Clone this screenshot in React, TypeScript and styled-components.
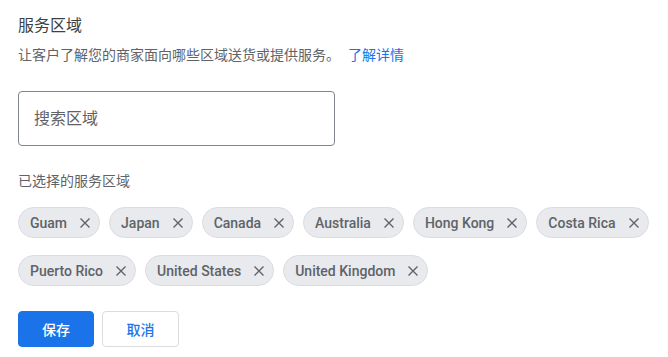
import { createGlobalStyle, styled } from "styled-components";

const GlobalStyle = createGlobalStyle`
  body {
    margin: 0;
    background: #ffffff;
    font-family: Roboto, "Noto Sans CJK SC", sans-serif;
  }
`;

const Wrapper = styled.div`
  padding: 14px 18px;
  display: flex;
  flex-direction: column;
  align-items: flex-start;
`;

const Title = styled.h2`
  margin: 0;
  font-size: 16px;
  line-height: 24px;
  font-weight: 400;
  color: #3c4043;
`;

const Description = styled.p`
  margin: 7px 0 0;
  font-size: 14px;
  line-height: 20px;
  color: #5f6368;
`;

const Link = styled.a`
  color: #1a73e8;
  text-decoration: none;
  margin-left: 8px;
`;

const SearchBox = styled.div`
  margin-top: 26px;
  width: 317px;
  height: 55px;
  box-sizing: border-box;
  border: 1px solid #80868b;
  border-radius: 4px;
  display: flex;
  align-items: center;
  padding: 0 15px;
`;

const SearchInput = styled.input`
  border: none;
  outline: none;
  width: 100%;
  font-family: Roboto, "Noto Sans CJK SC", sans-serif;
  font-size: 16px;
  color: #3c4043;
  padding: 0;
  background: transparent;

  &::placeholder {
    color: #5f6368;
  }
`;

const Label = styled.div`
  margin-top: 25px;
  font-size: 14px;
  line-height: 20px;
  color: #5f6368;
`;

const ChipList = styled.div`
  margin-top: 16px;
  display: flex;
  flex-wrap: wrap;
  column-gap: 9px;
  row-gap: 17px;
  width: 100%;
`;

const Chip = styled.div`
  height: 31px;
  box-sizing: border-box;
  display: flex;
  align-items: center;
  padding: 0 8px 0 11px;
  background: #e8eaed;
  border: 1px solid #dadce0;
  border-radius: 16px;
  font-size: 14px;
  font-weight: 500;
  color: #5f6368;
`;

const RemoveIcon = styled.svg`
  margin-left: 12px;
  flex-shrink: 0;
`;

const Actions = styled.div`
  margin-top: 25px;
  display: flex;
  gap: 8px;
`;

const Button = styled.button<{ $primary?: boolean }>`
  height: 36px;
  width: ${(p) => (p.$primary ? "76px" : "77px")};
  box-sizing: border-box;
  padding: 0;
  display: flex;
  align-items: center;
  justify-content: center;
  border-radius: 4px;
  font-family: Roboto, "Noto Sans CJK SC", sans-serif;
  font-size: 14px;
  font-weight: 500;
  cursor: pointer;
  background: ${(p) => (p.$primary ? "#1a73e8" : "#ffffff")};
  color: ${(p) => (p.$primary ? "#ffffff" : "#1a73e8")};
  border: 1px solid ${(p) => (p.$primary ? "#1a73e8" : "#dadce0")};
`;

const regions = [
  "Guam",
  "Japan",
  "Canada",
  "Australia",
  "Hong Kong",
  "Costa Rica",
  "Puerto Rico",
  "United States",
  "United Kingdom",
];

export default function App() {
  return (
    <>
      <GlobalStyle />
      <Wrapper>
        <Title>服务区域</Title>
        <Description>
          让客户了解您的商家面向哪些区域送货或提供服务。
          <Link href="#">了解详情</Link>
        </Description>
        <SearchBox>
          <SearchInput placeholder="搜索区域" />
        </SearchBox>
        <Label>已选择的服务区域</Label>
        <ChipList>
          {regions.map((r) => (
            <Chip key={r}>
              {r}
              <RemoveIcon width="12" height="12" viewBox="0 0 12 12">
                <path
                  d="M1.5 1.5 L10.5 10.5 M10.5 1.5 L1.5 10.5"
                  stroke="#5f6368"
                  strokeWidth="1.4"
                  fill="none"
                />
              </RemoveIcon>
            </Chip>
          ))}
        </ChipList>
        <Actions>
          <Button $primary>保存</Button>
          <Button>取消</Button>
        </Actions>
      </Wrapper>
    </>
  );
}
